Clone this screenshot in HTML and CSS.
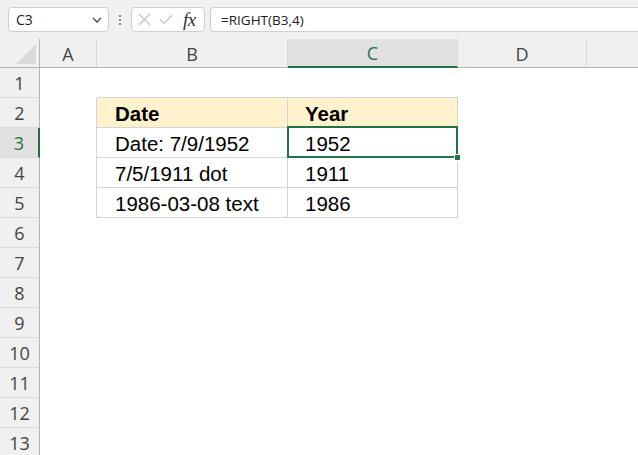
FILE: index.html
```html
<!DOCTYPE html>
<html>
<head>
<meta charset="utf-8">
<link rel="stylesheet" href="styles.css">
</head>
<body>
<div class="app">
  <div class="toolbar">
    <div class="namebox">
      <span class="ref">C3</span>
      <svg class="chev" width="10" height="6" viewBox="0 0 10 6"><path d="M1 1 L5 5 L9 1" fill="none" stroke="#444" stroke-width="1.3"/></svg>
    </div>
    <div class="dots"><i></i><i></i><i></i></div>
    <div class="fxbox">
      <svg width="13" height="13" viewBox="0 0 13 13"><path d="M1 1 L12 12 M12 1 L1 12" stroke="#c4c4c4" stroke-width="1.2" fill="none"/></svg>
      <svg width="14" height="11" viewBox="0 0 14 11"><path d="M1 5.5 L5 9.5 L13 1" stroke="#c4c4c4" stroke-width="1.2" fill="none"/></svg>
      <span class="fx">fx</span>
    </div>
    <div class="formula">=RIGHT(B3,4)</div>
  </div>
  <div class="grid">
    <div class="corner"><span class="tri"></span></div>
    <div class="ch">A</div>
    <div class="ch">B</div>
    <div class="ch sel">C</div>
    <div class="ch">D</div>
    <div class="ch last"></div>

    <div class="rh">1</div><div class="c"></div><div class="c tb"></div><div class="c tb"></div><div class="c"></div><div class="c"></div>

    <div class="rh">2</div><div class="c tl"></div><div class="c t hd pb">Date</div><div class="c t hd pc">Year</div><div class="c"></div><div class="c"></div>

    <div class="rh rsel">3</div><div class="c tl"></div><div class="c t pb">Date: 7/9/1952</div><div class="c t pc active">1952<span class="handle"></span></div><div class="c"></div><div class="c"></div>

    <div class="rh">4</div><div class="c tl"></div><div class="c t pb">7/5/1911 dot</div><div class="c t pc">1911</div><div class="c"></div><div class="c"></div>

    <div class="rh">5</div><div class="c tl"></div><div class="c t pb">1986-03-08 text</div><div class="c t pc">1986</div><div class="c"></div><div class="c"></div>

    <div class="rh">6</div><div class="c"></div><div class="c"></div><div class="c"></div><div class="c"></div><div class="c"></div>
    <div class="rh">7</div><div class="c"></div><div class="c"></div><div class="c"></div><div class="c"></div><div class="c"></div>
    <div class="rh">8</div><div class="c"></div><div class="c"></div><div class="c"></div><div class="c"></div><div class="c"></div>
    <div class="rh">9</div><div class="c"></div><div class="c"></div><div class="c"></div><div class="c"></div><div class="c"></div>
    <div class="rh">10</div><div class="c"></div><div class="c"></div><div class="c"></div><div class="c"></div><div class="c"></div>
    <div class="rh">11</div><div class="c"></div><div class="c"></div><div class="c"></div><div class="c"></div><div class="c"></div>
    <div class="rh">12</div><div class="c"></div><div class="c"></div><div class="c"></div><div class="c"></div><div class="c"></div>
    <div class="rh">13</div><div class="c"></div><div class="c"></div><div class="c"></div><div class="c"></div><div class="c"></div>
  </div>
</div>
</body>
</html>
```

FILE: styles.css
```css
* { box-sizing: border-box; }
html, body { margin: 0; padding: 0; }
body {
  width: 638px;
  height: 455px;
  overflow: hidden;
  background: #ffffff;
  font-family: "Open Sans", "Noto Sans", sans-serif;
}
.app { display: flex; flex-direction: column; }

.toolbar {
  height: 39px;
  background: #f0f0f0;
  display: flex;
  align-items: flex-start;
  padding: 7px 0 0 8px;
}
.namebox {
  width: 101px;
  height: 25px;
  background: #fff;
  border: 1px solid #cfcfcf;
  border-radius: 4px;
  display: flex;
  align-items: center;
  justify-content: space-between;
  padding: 0 6px 0 7px;
  font-size: 14px;
  color: #222;
}
.dots {
  width: 22px;
  height: 25px;
  display: flex;
  flex-direction: column;
  align-items: center;
  justify-content: center;
  gap: 2px;
}
.dots i {
  display: block;
  width: 2px;
  height: 2px;
  background: #8a8a8a;
}
.fxbox {
  width: 74px;
  height: 25px;
  background: #fff;
  border: 1px solid #cfcfcf;
  border-radius: 4px;
  display: flex;
  align-items: center;
  padding: 0 4px 0 6px;
  gap: 8px;
}
.fx {
  font-family: "Liberation Serif", "DejaVu Serif", serif;
  font-style: italic;
  font-size: 19px;
  color: #333;
  margin-left: 2px;
  letter-spacing: -0.5px;
  line-height: 1;
}
.formula {
  flex: 1;
  margin-left: 5px;
  height: 25px;
  background: #fff;
  border: 1px solid #cfcfcf;
  border-right: none;
  border-radius: 4px 0 0 4px;
  display: flex;
  align-items: center;
  padding-left: 10px;
  font-size: 13.5px;
  color: #222;
}

.grid {
  display: grid;
  grid-template-columns: 40px 57px 191px 170px 129px 1fr;
  grid-template-rows: 29px repeat(13, 30px);
}
.corner {
  background: #f0f0f0;
  border-right: 1px solid #b4b4b4;
  border-bottom: 1px solid #b4b4b4;
  display: flex;
  justify-content: flex-end;
  align-items: flex-end;
  padding: 0 3px 3px 0;
}
.tri {
  width: 20px;
  height: 20px;
  background: #dadada;
  clip-path: polygon(100% 0, 100% 100%, 0 100%);
}
.ch {
  background: #f0f0f0;
  border-right: 1px solid #d8d8d8;
  border-bottom: 1px solid #b4b4b4;
  display: flex;
  align-items: center;
  justify-content: center;
  font-size: 18px;
  color: #444;
  padding-top: 1px;
}
.ch.last { border-right: none; }
.ch.sel {
  background: #e1e1e1;
  color: #217346;
  border-bottom: 2px solid #217346;
}
.rh {
  background: #f0f0f0;
  border-right: 1px solid #b4b4b4;
  border-bottom: 1px solid #dadada;
  display: flex;
  align-items: center;
  justify-content: center;
  font-size: 18px;
  color: #444;
  padding-top: 1px;
}
.rh.rsel {
  background: #e1e1e1;
  color: #217346;
  border-right: 2px solid #217346;
}

.c {
  background: #fff;
  display: flex;
  align-items: center;
  font-family: "Liberation Sans", Arial, sans-serif;
  font-size: 20.5px;
  color: #000;
  padding-top: 2px;
  white-space: nowrap;
}
.tb { border-bottom: 1px solid #d4d4d4; }
.tl { border-right: 1px solid #d4d4d4; }
.t {
  border-right: 1px solid #d4d4d4;
  border-bottom: 1px solid #d4d4d4;
}
.hd {
  background: #fff2cc;
  font-weight: bold;
}
.pb { padding-left: 18px; }
.pc { padding-left: 17px; }
.active { position: relative; }
.active::after {
  content: "";
  position: absolute;
  left: -1px;
  top: -2px;
  right: -1px;
  bottom: -1px;
  border: 2px solid #217346;
}
.handle {
  position: absolute;
  right: -4px;
  bottom: -4px;
  width: 7px;
  height: 7px;
  background: #217346;
  border: 1px solid #fff;
  z-index: 2;
}
```
